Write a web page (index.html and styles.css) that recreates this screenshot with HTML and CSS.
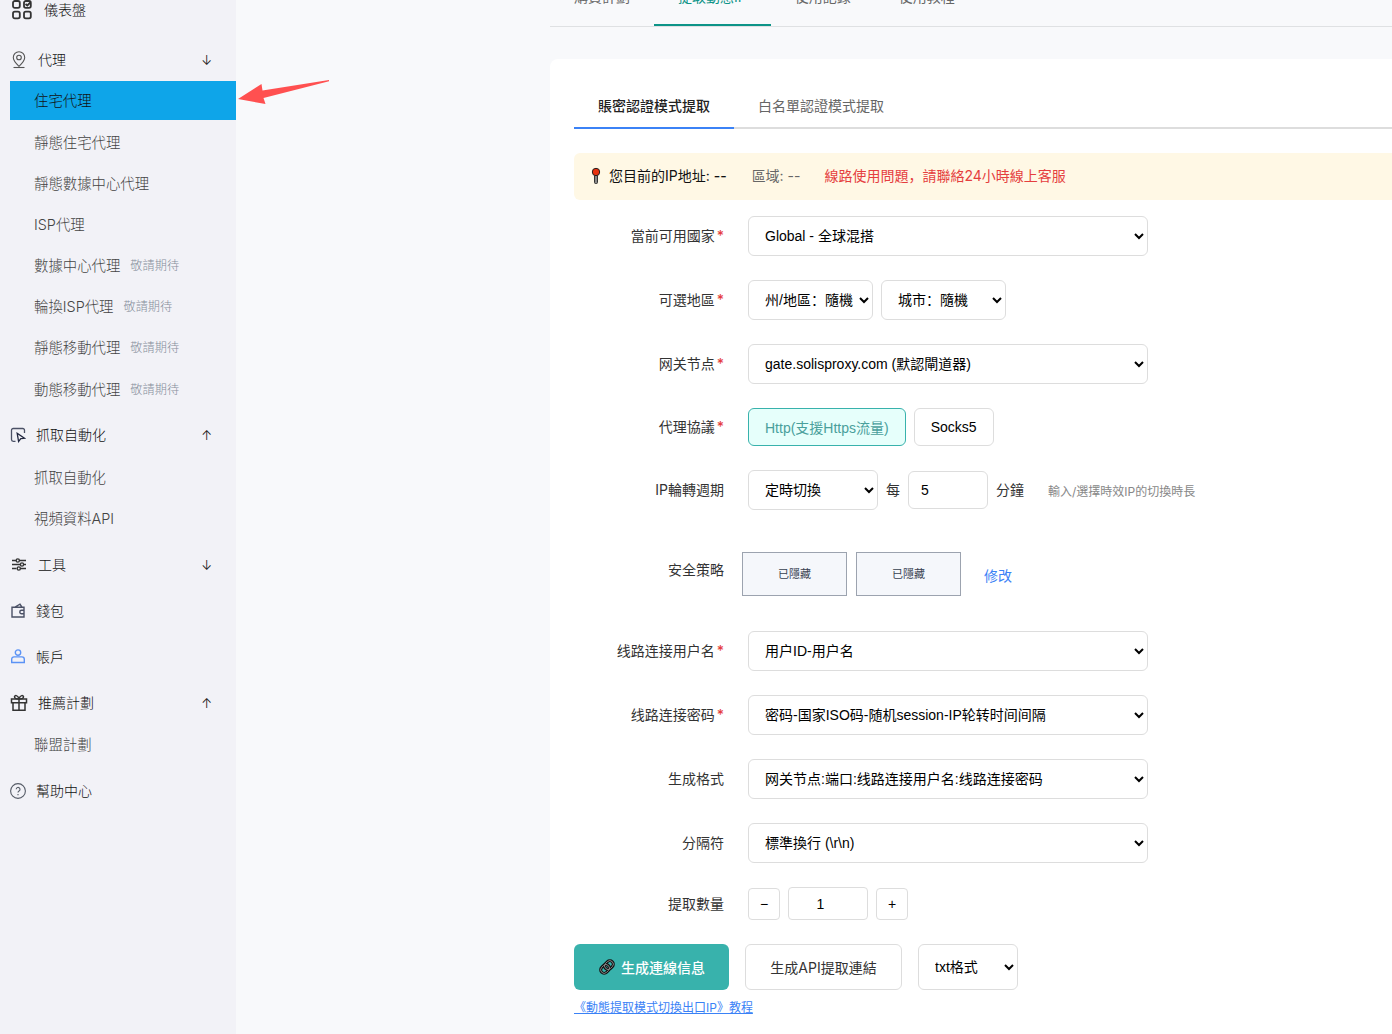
FILE: index.html
```html
<!DOCTYPE html>
<html lang="zh-CN">
<head>
    <meta charset="UTF-8">
    <meta name="viewport" content="width=device-width, initial-scale=1.0">
    <title>住宅代理</title>
    <link rel="stylesheet" href="styles.css">
</head>
<body>
    <div class="layout">
        <aside class="sidebar">
            <div class="menu-title dashboard">
                <svg width="22" height="22" viewBox="0 0 22 22" fill="none" stroke="#333" stroke-width="1.8">
                    <rect x="2" y="2" width="6.8" height="6.8" rx="1.8"/>
                    <rect x="13" y="2" width="6.8" height="6.8" rx="1.8"/>
                    <rect x="2" y="12.6" width="6.8" height="6.8" rx="1.8"/>
                    <rect x="13" y="12.6" width="6.8" height="6.8" rx="1.8"/>
                    <path d="M14.5 5l1.8 1.5 3-3"/>
                </svg>
                <span>儀表盤</span>
            </div>

            <div class="menu-group">
                <div class="menu-title">
                    <svg width="18" height="18" viewBox="0 0 18 18" fill="none" stroke="#555" stroke-width="1.1">
                        <path d="M9 15.3C5.5 12 3.3 9.5 3.3 6.5a5.7 5.7 0 0 1 11.4 0C14.7 9.5 12.5 12 9 15.3z"/>
                        <circle cx="9" cy="6.5" r="2.3"/>
                        <path d="M3.5 16.5h11"/>
                    </svg>
                    <span>代理</span>
                    <i class="arrow">↓</i>
                </div>
                <div class="menu-items first">
                    <a class="menu-item active">住宅代理</a>
                    <a class="menu-item">靜態住宅代理</a>
                    <a class="menu-item">靜態數據中心代理</a>
                    <a class="menu-item">ISP代理</a>
                    <a class="menu-item">數據中心代理<small>敬請期待</small></a>
                    <a class="menu-item">輪換ISP代理<small>敬請期待</small></a>
                    <a class="menu-item">靜態移動代理<small>敬請期待</small></a>
                    <a class="menu-item">動態移動代理<small>敬請期待</small></a>
                </div>
            </div>

            <div class="menu-group">
                <div class="menu-title">
                    <svg width="16" height="16" viewBox="0 0 16 16" fill="none" stroke="#4b5166" stroke-width="1.3">
                        <path d="M5.5 14.3H3.2A1.7 1.7 0 0 1 1.5 12.6V3.2A1.7 1.7 0 0 1 3.2 1.5h9.6a1.7 1.7 0 0 1 1.7 1.7V6"/>
                        <path d="M7.2 6.3l7.2 5-3.600.4-2.2 2.800z" stroke="#222840"/>
                    </svg>
                    <span>抓取自動化</span>
                    <i class="arrow">↑</i>
                </div>
                <div class="menu-items">
                    <a class="menu-item">抓取自動化</a>
                    <a class="menu-item">視頻資料API</a>
                </div>
            </div>

            <div class="menu-group">
                <div class="menu-title">
                    <svg width="18" height="18" viewBox="0 0 18 18" fill="none" stroke="#333" stroke-width="1.4">
                        <path d="M2 4.5h4M9.5 4.5H16M2 8.500h8M14 8.500h2M2 12.500h4.500M10.500 12.500H16"/>
                        <circle cx="7.8" cy="4.5" r="1.6"/>
                        <circle cx="12" cy="8.5" r="1.6"/>
                        <circle cx="8.8" cy="12.5" r="1.6"/>
                    </svg>
                    <span>工具</span>
                    <i class="arrow">↓</i>
                </div>
            </div>

            <div class="menu-group">
                <div class="menu-title">
                    <svg width="16" height="16" viewBox="0 0 16 16" fill="none" stroke="#4b5166" stroke-width="1.4">
                        <path d="M2 4.2h12v9.800H2zM5 4l5-2.800 1.800 2.800"/>
                        <path d="M14 7.3h-2.500a1.600 1.600 0 0 0 0 3.400H14"/>
                    </svg>
                    <span>錢包</span>
                </div>
            </div>

            <div class="menu-group">
                <div class="menu-title">
                    <svg width="16" height="16" viewBox="0 0 16 16" fill="none" stroke="#5b93f5" stroke-width="1.4">
                        <circle cx="8" cy="3.6" r="2.7"/>
                        <path d="M1.7 13.5v-3.300a2.300 2.300 0 0 1 2.300-2.300h8a2.300 2.300 0 0 1 2.300 2.300v3.300z"/>
                    </svg>
                    <span>帳戶</span>
                </div>
            </div>

            <div class="menu-group">
                <div class="menu-title">
                    <svg width="18" height="18" viewBox="0 0 18 18" fill="none" stroke="#333" stroke-width="1.5">
                        <path d="M1.5 5h15v3.700h-15zM3 8.700h12v7.600H3zM9 5v11"/>
                        <path d="M9 5C6.500 5 4.500 4.200 4.500 2.700S7.800.6 9 5zM9 5c2.500 0 4.500-.8 4.500-2.300S10.200.6 9 5z"/>
                    </svg>
                    <span>推薦計劃</span>
                    <i class="arrow">↑</i>
                </div>
                <div class="menu-items">
                    <a class="menu-item">聯盟計劃</a>
                </div>
            </div>

            <div class="menu-group">
                <div class="menu-title">
                    <svg width="16" height="16" viewBox="0 0 16 16" fill="none" stroke="#555b66" stroke-width="1.1">
                        <circle cx="8" cy="8" r="7.4"/>
                        <path d="M6.2 6.2a1.900 1.900 0 1 1 2.800 1.800c-.7.4-1 .8-1 1.600M8 11v1.200"/>
                    </svg>
                    <span>幫助中心</span>
                </div>
            </div>
        </aside>

        <!-- 指向目前頁面的箭頭 -->
        <svg class="pointer" width="94" height="28" viewBox="0 0 94 28">
            <path d="M1 21L24.5 6 25.500 12.500 92 2 92 3.200 26.500 20 28.500 26z" fill="#ff5050"/>
        </svg>

        <main class="content">
            <nav class="tabs">
                <a>購買計劃</a>
                <a class="active">提取動態IP</a>
                <a>使用記錄</a>
                <a>使用教程</a>
            </nav>

            <section class="card">
                <div class="mode-tabs">
                    <a class="active">賬密認證模式提取</a>
                    <a>白名單認證模式提取</a>
                </div>

                <div class="notice">
                    <svg width="12" height="18" viewBox="0 0 12 18">
                        <rect x="4.5" y="8" width="3" height="8.5" rx="1" fill="#888" stroke="#333"/>
                        <circle cx="6" cy="5" r="3.7" fill="#e8310e" stroke="#222"/>
                    </svg>
                    <span class="ip">您目前的IP地址: <b>--</b></span>
                    <span class="area">區域: --</span>
                    <span class="warn">線路使用問題，請聯絡24小時線上客服</span>
                </div>

                <div class="form-row">
                    <label>當前可用國家<b>*</b></label>
                    <select class="long"><option>Global - 全球混搭</option></select>
                </div>
                <div class="form-row">
                    <label>可選地區<b>*</b></label>
                    <select class="region"><option>州/地區：隨機</option></select>
                    <select class="region"><option>城市：隨機</option></select>
                </div>
                <div class="form-row">
                    <label>网关节点<b>*</b></label>
                    <select class="long"><option>gate.solisproxy.com (默認閘道器)</option></select>
                </div>
                <div class="form-row">
                    <label>代理協議<b>*</b></label>
                    <button class="option active">Http(支援Https流量)</button>
                    <button class="option">Socks5</button>
                </div>
                <div class="form-row">
                    <label>IP輪轉週期</label>
                    <select class="cycle"><option>定時切換</option></select>
                    <span>每</span>
                    <input class="minutes" type="number" value="5">
                    <span>分鐘</span>
                    <span class="hint">輸入/選擇時效IP的切換時長</span>
                </div>
                <div class="form-row policy">
                    <label>安全策略</label>
                    <div class="hidden-box">已隱藏</div>
                    <div class="hidden-box">已隱藏</div>
                    <a class="edit">修改</a>
                </div>
                <div class="form-row">
                    <label>线路连接用户名<b>*</b></label>
                    <select class="long"><option>用户ID-用户名</option></select>
                </div>
                <div class="form-row">
                    <label>线路连接密码<b>*</b></label>
                    <select class="long"><option>密码-国家ISO码-随机session-IP轮转时间间隔</option></select>
                </div>
                <div class="form-row">
                    <label>生成格式</label>
                    <select class="long"><option>网关节点:端口:线路连接用户名:线路连接密码</option></select>
                </div>
                <div class="form-row">
                    <label>分隔符</label>
                    <select class="long"><option>標準換行 (\r\n)</option></select>
                </div>
                <div class="form-row">
                    <label>提取數量</label>
                    <button class="step">−</button>
                    <input class="count" type="number" value="1">
                    <button class="step">+</button>
                </div>

                <div class="actions">
                    <button class="primary">
                        <svg width="18" height="18" viewBox="0 0 18 18" fill="none">
                            <g transform="rotate(-45 9 9)">
                                <rect x="1.5" y="5.5" width="9.5" height="7" rx="3.5" stroke="#111" stroke-width="3"/>
                                <rect x="7" y="5.5" width="9.5" height="7" rx="3.5" stroke="#111" stroke-width="3"/>
                                <rect x="1.5" y="5.5" width="9.5" height="7" rx="3.5" stroke="#999" stroke-width=".8"/>
                                <rect x="7" y="5.5" width="9.5" height="7" rx="3.5" stroke="#999" stroke-width=".8"/>
                            </g>
                        </svg>
                        <span>生成連線信息</span>
                    </button>
                    <button class="secondary">生成API提取連結</button>
                    <select class="format"><option>txt格式</option></select>
                </div>
                <a class="guide">《動態提取模式切換出口IP》教程</a>
            </section>
        </main>
    </div>
</body>
</html>
```
FILE: styles.css
```css
* {
    box-sizing: border-box;
}

body {
    margin: 0;
    height: 100vh;
    overflow: hidden;
    background: #f8f9fb;
    color: #333;
    font-family: Inter, "Noto Sans CJK SC", sans-serif;
    font-size: 14px;
    line-height: 20px;
}

.layout {
    display: flex;
    height: 100vh;
    position: relative;
    overflow: hidden;
}

/* sidebar */
.sidebar {
    flex: none;
    width: 236px;
    padding-left: 10px;
    background: #f2f2f7;
    font-weight: 300;
}

.menu-title {
    display: flex;
    align-items: center;
    gap: 10px;
    height: 42px;
    color: #111;
}

.menu-title.dashboard {
    gap: 11px;
    margin-top: -11px;
    margin-bottom: 8px;
    padding-left: 1px;
}

.menu-group {
    margin-bottom: 4px;
}

.menu-items {
    padding: 1.2px 0 1.8px;
    font-size: 14.4px;
}

.menu-items.first {
    padding-top: 0;
}

.arrow {
    margin-left: auto;
    margin-right: 24px;
    font-size: 13px;
    font-style: normal;
}

.menu-item {
    display: flex;
    align-items: center;
    height: 39.2px;
    margin-bottom: 2px;
    padding: 1.5px 0 0 24px;
    color: #444;
}

.menu-item:last-child {
    margin-bottom: 0;
}

.menu-item.active {
    background: #0ea5e9;
    color: #111;
}

.menu-item small {
    margin-left: 10px;
    font-size: 12.2px;
    color: #868e9b;
}

.pointer {
    position: absolute;
    left: 237px;
    top: 78px;
}

/* content */
.content {
    flex: none;
    width: 1000px;
    margin-left: 314px;
}

.tabs {
    display: flex;
    height: 27px;
    align-items: flex-end;
    border-bottom: 1px solid #dfe1e3;
    margin-bottom: 32px;
}

.tabs a {
    height: 47px;
    padding: 8px 24px 0;
    color: #666;
}

.tabs a.active {
    color: #0d9488;
    border-bottom: 2px solid #0d9488;
}

.card {
    height: 1000px;
    padding: 24px;
    background: #fff;
    border-radius: 8px;
}

.mode-tabs {
    display: flex;
    height: 46px;
    border-bottom: 2px solid #ddd;
    margin-bottom: 24px;
}

.mode-tabs a {
    height: 46px;
    padding: 13px 24px;
    color: #666;
}

.mode-tabs a.active {
    color: #222;
    font-weight: 500;
    border-bottom: 2px solid #3b82f6;
}

.notice {
    display: flex;
    align-items: center;
    height: 47px;
    margin-bottom: 16px;
    padding: 0 0 2px 16px;
    background: #fff8e5;
    border-radius: 6px;
}

.ip {
    margin-left: 7px;
    color: #111;
}

.ip b {
    font-weight: 500;
}

.area {
    margin-left: 25px;
    color: #666;
}

.warn {
    margin-left: 24px;
    color: #e53e3e;
}

.form-row {
    display: flex;
    align-items: center;
    gap: 8px;
    margin-bottom: 24px;
}

.form-row label {
    width: 150px;
    margin-right: 16px;
    text-align: right;
}

.form-row label b {
    margin-left: 2px;
    color: #e53e3e;
    font-weight: 500;
}

select,
input,
button {
    background: #fff;
    color: #000;
    border: 1px solid #ddd;
    border-radius: 6px;
    font-family: "Liberation Sans", "Noto Sans CJK SC", sans-serif;
    font-size: 14px;
}

select {
    height: 40px;
    padding: 0 0 0 12px;
}

.long {
    width: 400px;
}

.region {
    width: 125px;
}

.cycle {
    width: 130px;
}

.option {
    height: 38px;
    padding: 0 16px;
}

.option.active {
    background: #e6fffb;
    border-color: #38b2ac;
    color: #4aa09b;
}

.minutes {
    width: 80px;
    height: 38px;
    padding: 0 12px;
}

.hint {
    margin-left: 16px;
    padding-top: 3px;
    color: #888;
    font-size: 12px;
}

.policy {
    height: 44px;
    margin: 42px 0 35px;
}

.policy label {
    margin-right: 10px;
    margin-top: -8px;
}

.hidden-box {
    width: 105px;
    height: 44px;
    margin-right: 1px;
    background: #f5f7fb;
    border: 1px solid #9ca3af;
    color: #374151;
    font-size: 11px;
    line-height: 42px;
    text-align: center;
}

.edit {
    margin-left: 14px;
    margin-top: 4px;
    color: #3b82f6;
}

.step {
    width: 32px;
    height: 32px;
    padding: 0;
    border-radius: 4px;
}

.count {
    width: 80px;
    height: 33px;
    text-align: center;
    border-radius: 4px;
}

.actions {
    display: flex;
    gap: 16px;
    margin-bottom: 7px;
}

.actions button {
    height: 46px;
    font-family: Inter, "Noto Sans CJK SC", sans-serif;
}

.primary {
    display: flex;
    align-items: center;
    justify-content: center;
    gap: 5px;
    width: 155px;
    background: #38b2ac;
    border: none;
    color: #fff;
    font-weight: 500;
}

.secondary {
    width: 157px;
    color: #333;
}

.format {
    width: 100px;
    height: 46px;
}

.guide {
    color: #3b82f6;
    font-size: 12px;
    text-decoration: underline;
}
```
